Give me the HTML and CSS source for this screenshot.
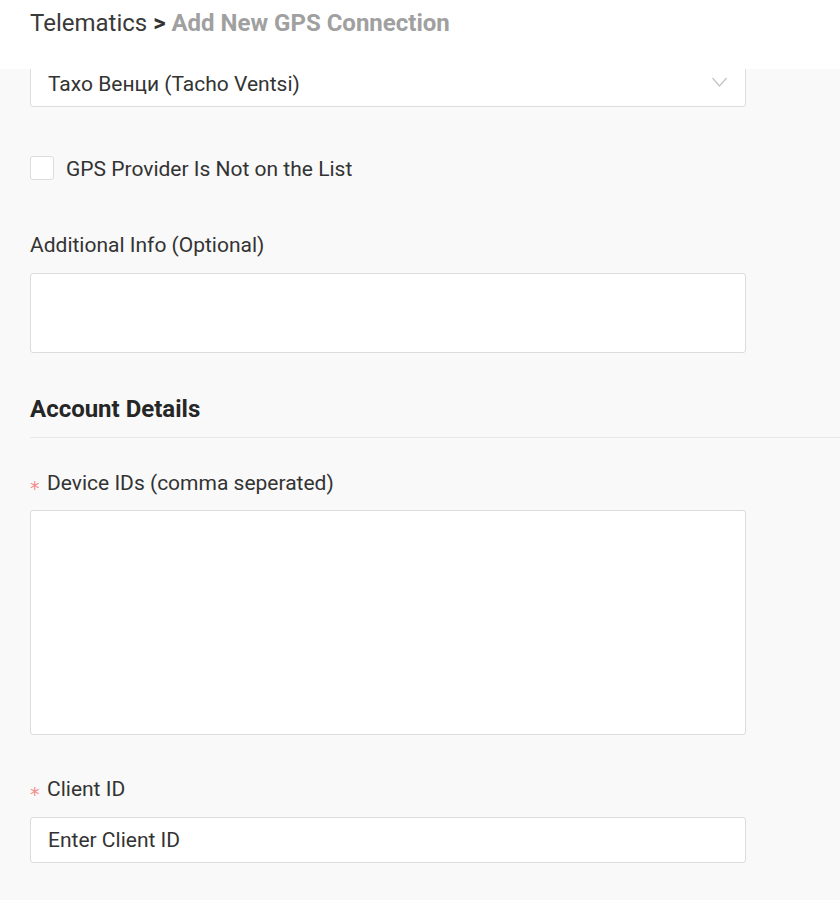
FILE: index.html
```html
<!DOCTYPE html>
<html lang="en">
<head>
<meta charset="utf-8">
<title>Add New GPS Connection</title>
<link rel="stylesheet" href="styles.css">
</head>
<body>
<header class="topbar">
  <div class="crumbs"><span class="crumb">Telematics</span> <span class="sep">&gt;</span> <span class="current">Add New GPS Connection</span></div>
</header>
<main class="content">
  <div class="select">
    <span class="select-value">Тахо Венци (Tacho Ventsi)</span>
    <svg class="chevron" width="15" height="10" viewBox="0 0 15 10"><path d="M0.5 1 L7.5 9 L14.5 1" fill="none" stroke="#c4c4c4" stroke-width="1.2"/></svg>
  </div>
  <label class="check-row"><span class="checkbox"></span><span class="check-label">GPS Provider Is Not on the List</span></label>
  <div class="field-label label-additional">Additional Info (Optional)</div>
  <div class="textarea textarea-small"></div>
  <h2 class="section-title">Account Details</h2>
  <div class="field-label label-device"><span class="req">*</span>Device IDs (comma seperated)</div>
  <div class="textarea textarea-large"></div>
  <div class="field-label label-client"><span class="req">*</span>Client ID</div>
  <div class="input"><span class="placeholder">Enter Client ID</span></div>
</main>
</body>
</html>
```
FILE: styles.css
```css
* { box-sizing: border-box; }
html, body { margin: 0; padding: 0; }
body {
  background: #f9f9f9;
  font-family: Roboto, "Noto Sans", sans-serif;
  color: #333;
  width: 840px;
  height: 900px;
  overflow: hidden;
}
.topbar {
  position: fixed;
  top: 0; left: 0; right: 0;
  height: 69px;
  background: #fff;
  z-index: 10;
}
.crumbs {
  padding: 9px 0 0 30px;
  font-size: 24px;
  line-height: 29px;
  white-space: nowrap;
}
.crumb { color: #3a3a3a; }
.sep { font-weight: 700; color: #333; }
.current { font-weight: 700; color: #a0a0a0; }

.content {
  padding: 61px 0 0 30px;
}
.select {
  width: 716px;
  height: 46px;
  background: #fff;
  border: 1px solid #dcdcdc;
  border-radius: 3px;
  display: flex;
  align-items: center;
  justify-content: space-between;
  padding: 0 18px 0 17px;
}
.select-value { font-size: 21px; color: #333; }
.chevron { margin-bottom: 4px; }

.check-row {
  display: flex;
  align-items: center;
  margin-top: 49px;
  height: 24px;
}
.checkbox {
  width: 24px; height: 24px;
  background: #fff;
  border: 1px solid #dcdcdc;
  border-radius: 3px;
}
.check-label { margin-left: 12px; font-size: 21px; color: #333; padding-top: 2px; }

.field-label {
  font-size: 21px;
  line-height: 24px;
  height: 24px;
  color: #333;
  white-space: nowrap;
}
.label-additional { margin-top: 53px; }
.label-device { margin-top: 33px; }
.label-client { margin-top: 42px; }
.req {
  display: inline-block;
  color: #f58a8a;
  font-family: "DejaVu Sans", sans-serif;
  font-size: 19px;
  width: 17px;
  vertical-align: -5px;
  line-height: 19px;
}

.textarea, .input {
  width: 716px;
  background: #fff;
  border: 1px solid #dcdcdc;
  border-radius: 3px;
  margin-top: 16px;
}
.textarea-small { height: 80px; }
.textarea-large { height: 225px; margin-top: 15px; }
.input {
  height: 46px;
  display: flex;
  align-items: center;
  padding-left: 17px;
}
.placeholder { font-size: 21px; color: #333; }

.section-title {
  margin: 42px 0 0 0;
  font-size: 24px;
  line-height: 28px;
  font-weight: 700;
  color: #262626;
  padding-bottom: 14px;
  border-bottom: 1px solid #e8e8e8;
}
```
